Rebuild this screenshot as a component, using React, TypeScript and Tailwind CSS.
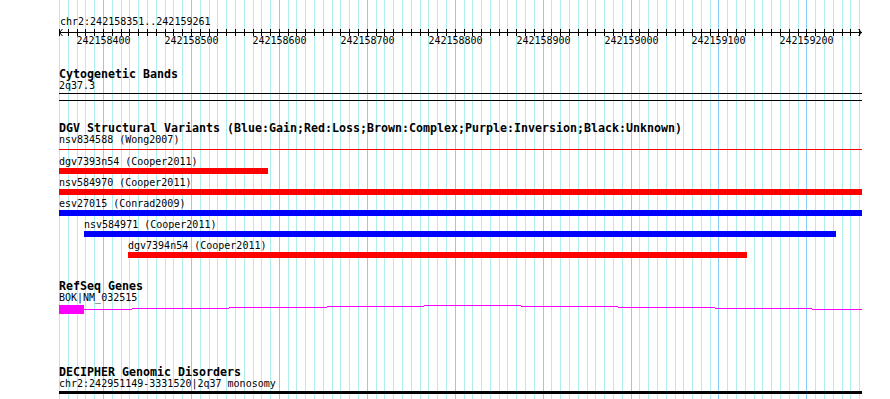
import React from "react"

const START = 242158351
const px = (b: number) => Math.round(60 + ((b - START) * 800) / 910)
const gridBp = Array.from({ length: 92 }, (_, i) => 242158350 + i * 10)
const LEFT = 59

// intron "hat" of the gene, as [x0, x1, row offset] in page pixels
const hat: [number, number, number][] = [
  [84, 132, 4],
  [132, 229, 3],
  [229, 327, 2],
  [327, 424, 1],
  [424, 521, 0],
  [521, 618, 1],
  [618, 715, 2],
  [715, 812, 3],
  [812, 862, 4],
]

const variants = [
  { name: "dgv7393n54 (Cooper2011)", color: "bg-[#ff0000]", x: 59, w: 209 },
  { name: "nsv584970 (Cooper2011)", color: "bg-[#ff0000]", x: 59, w: 803 },
  { name: "esv27015 (Conrad2009)", color: "bg-[#0000ff]", x: 59, w: 803 },
  { name: "nsv584971 (Cooper2011)", color: "bg-[#0000ff]", x: 84, w: 752 },
  { name: "dgv7394n54 (Cooper2011)", color: "bg-[#ff0000]", x: 128, w: 619 },
]

const small = "text-[10px] leading-[12px] whitespace-nowrap"
const title = "text-[11.63px] leading-[12px] font-bold whitespace-nowrap"

function Ruler() {
  return (
    <svg width={803} height={17} className="block overflow-visible">
      <g shapeRendering="crispEdges">
        <rect x={0} y={3} width={803} height={1} fill="#000" />
        {gridBp.map((b) => (
          <rect key={b} x={px(b) - LEFT} y={0} width={1} height={7} fill="#000" />
        ))}
      </g>
      <path d="M3.5 0 L0.5 3.5 L3.5 7" stroke="#000" strokeWidth={1} fill="none" />
      <path d="M799.5 0 L802.5 3.5 L799.5 7" stroke="#000" strokeWidth={1} fill="none" />
      {gridBp
        .filter((b) => b % 100 === 0)
        .map((b) => (
          <text
            key={b}
            x={px(b) - LEFT + 0.5}
            y={14.5}
            textAnchor="middle"
            fontSize={10}
            fontFamily="'DejaVu Sans Mono', monospace"
            fill="#000"
          >
            {b}
          </text>
        ))}
    </svg>
  )
}

export default function App() {
  return (
    <div className="relative w-[890px] h-[399px] overflow-hidden bg-white text-black font-['DejaVu_Sans_Mono',monospace]">
      {/* background grid */}
      <svg className="absolute inset-0" width={890} height={399} shapeRendering="crispEdges">
        {gridBp.map((b) => (
          <rect
            key={b}
            x={px(b)}
            y={0}
            width={1}
            height={399}
            fill={b % 100 === 0 ? "#87cefa" : "#afeeee"}
          />
        ))}
      </svg>

      <div className="relative pl-[59px] pt-[16px] w-[862px]">
        <div className={`${small} pl-[1px]`}>chr2:242158351..242159261</div>
        <div className="mt-[1px]">
          <Ruler />
        </div>

        {/* Cytogenetic bands */}
        <div className={`${title} mt-[22px]`}>Cytogenetic Bands</div>
        <div className={small}>2q37.3</div>
        <div className="mt-[1px] h-[8px] w-[803px] border-y border-black" />

        {/* DGV */}
        <div className={`${title} mt-[21px]`}>
          DGV Structural Variants (Blue:Gain;Red:Loss;Brown:Complex;Purple:Inversion;Black:Unknown)
        </div>
        <div className={small}>nsv834588 (Wong2007)</div>
        <div className="mt-[3px] h-[1px] w-[803px] bg-[#ff0000]" />
        <div className="mt-[6px] flex flex-col gap-[3px]">
          {variants.map((v) => (
            <div key={v.name} style={{ marginLeft: v.x - LEFT }}>
              <div className={small}>{v.name}</div>
              <div className={`h-[6px] ${v.color}`} style={{ width: v.w }} />
            </div>
          ))}
        </div>

        {/* RefSeq */}
        <div className={`${title} mt-[22px]`}>RefSeq Genes</div>
        <div className={small}>BOK|NM_032515</div>
        <svg width={803} height={9} className="block mt-[1px]" shapeRendering="crispEdges">
          <rect x={0} y={0} width={25} height={9} fill="#ff00ff" />
          {hat.map(([a, b, r]) => (
            <rect key={a} x={a - LEFT} y={r} width={b - a} height={1} fill="#ff00ff" />
          ))}
        </svg>

        {/* DECIPHER */}
        <div className={`${title} mt-[52px]`}>DECIPHER Genomic Disorders</div>
        <div className={small}>chr2:242951149-3331520|2q37 monosomy</div>
        <div className="mt-[1px] h-[3px] w-[803px] bg-black" />
      </div>
    </div>
  )
}
